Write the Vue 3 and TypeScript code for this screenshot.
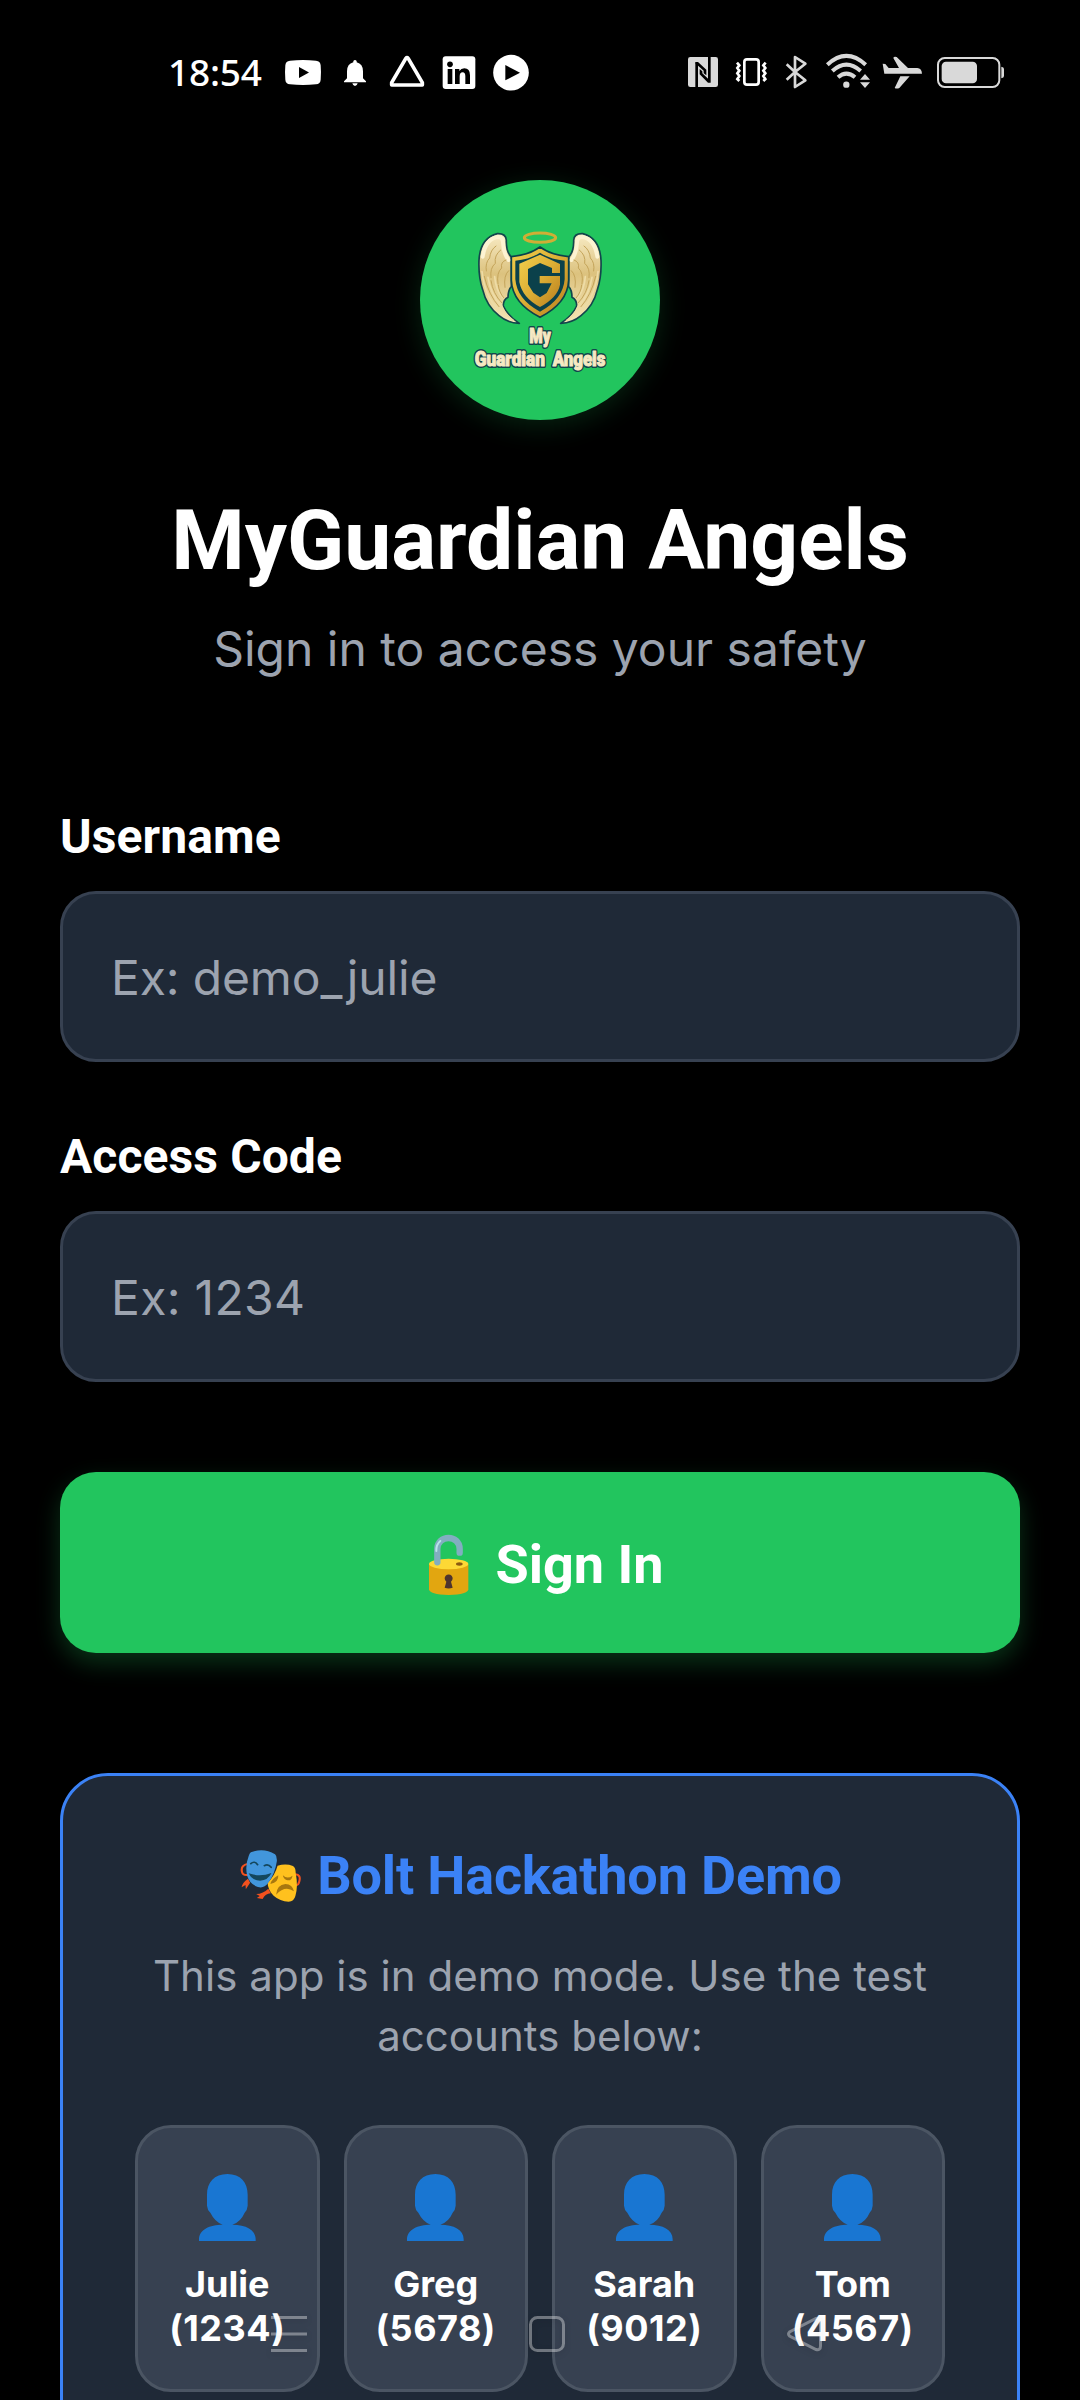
<script setup lang="ts">
import { ref } from 'vue'

// --- TYPES ---
interface DemoAccount {
  name: string
  username: string
  code: string
}

// --- STATE ---
const username = ref('')
const accessCode = ref('')

const accounts: DemoAccount[] = [
  { name: 'Julie', username: 'demo_julie', code: '1234' },
  { name: 'Greg', username: 'demo_greg', code: '5678' },
  { name: 'Sarah', username: 'demo_sarah', code: '9012' },
  { name: 'Tom', username: 'demo_tom', code: '4567' },
]

const fillAccount = (account: DemoAccount) => {
  username.value = account.username
  accessCode.value = account.code
}
</script>

<template>
  <div class="screen">
    <!-- Status bar -->
    <header class="status-bar">
      <span class="time">18:54</span>
      <div class="notifications">
        <svg viewBox="435 69 108 114">
          <path fill="#fff" fill-rule="evenodd" d="M450 92Q489 88 528 92Q541 93 542 106Q544 128 542 149Q541 162 528 163Q489 167 450 163Q437 162 436 149Q434 128 436 106Q437 93 450 92ZM477 111V144L507 127.500Z" />
        </svg>
        <svg viewBox="591 69 108 114">
          <path fill="#fff" d="M640 93Q645 87 650 93V97Q669 102 669 124V145L678 154V157H612V154L621 145V124Q621 102 640 97ZM637 160H653Q651 168 645 168Q639 168 637 160Z" />
        </svg>
        <svg viewBox="747 69 108 114">
          <path fill="none" stroke="#fff" stroke-width="11" stroke-linejoin="round" d="M797.500 85L755 158V165H847V158L804.500 85Q801 81 797.500 85Z" />
        </svg>
        <svg viewBox="904 69 108 114">
          <rect x="909" y="79" width="98" height="98" rx="9" fill="#fff" />
          <circle cx="931" cy="103" r="8.500" fill="#000" />
          <path fill="#000" d="M924 117H938V162H924ZM946 117H959V123Q964 115 974 115Q991 115 991 136V162H977V139Q977 127 969 127Q960 127 960 139V162H946Z" />
        </svg>
        <svg viewBox="1059 69 108 114">
          <circle cx="1113" cy="128" r="53.500" fill="#fff" />
          <path fill="#000" d="M1096 105V151L1140 128Z" />
        </svg>
      </div>
      <div class="system-icons">
        <svg class="w-nfc" viewBox="84 69 96 114">
          <rect x="84" y="81" width="90" height="90" rx="7" fill="#d9d9d9" />
          <path fill="none" stroke="#000" stroke-width="8" d="M110 172V98M148 80V154" />
          <path fill="#000" d="M106 96H114L139 119V136L131 130V122L106 100ZM152 158H144L119 133V117L127 124V130L152 154Z" />
        </svg>
        <svg class="w-vibrate" viewBox="225 69 108 114">
          <rect x="253" y="88" width="43" height="76" rx="8" fill="none" stroke="#fff" stroke-width="8" />
          <path fill="none" stroke="#fff" stroke-width="8" d="M231 98L238 106L232 114L238 122L232 130L238 138L232 147L238 153M317 98L310 106L316 114L310 122L316 130L310 138L316 147L310 153" />
        </svg>
        <svg class="w-bluetooth" viewBox="378 69 75 114">
          <path fill="none" stroke="#d9d9d9" stroke-width="8" stroke-linejoin="round" d="M380 103L405 126L436 151L405 171V81L436 101L405 126L380 149" />
        </svg>
        <svg class="w-wifi" viewBox="498 69 123 114">
          <g fill="none" stroke="#d9d9d9" stroke-width="12">
            <path d="M502 104Q559 51 617 104" />
            <path d="M517 123Q559 85 602 123" />
            <path d="M534 142Q559 120 585 142" />
          </g>
          <circle cx="559" cy="164" r="9.500" fill="#d9d9d9" />
          <path fill="#d9d9d9" d="M615 132L630 149H600ZM615 174L600 157H630Z" />
        </svg>
        <svg class="w-plane" viewBox="666 69 120 114">
          <path fill="#d9d9d9" d="M668 101L676 102L686 114H717L700 84Q701 79 710 81L744 114H772Q785 115 786 131H673ZM721 139H749L718 174Q710 177 704 174Z" />
        </svg>
        <svg class="w-battery" viewBox="831 69 201 114">
          <rect x="834" y="84" width="184" height="87" rx="20" fill="none" stroke="#d9d9d9" stroke-width="6" />
          <rect x="845" y="95" width="106" height="65" rx="13" fill="#d9d9d9" />
          <path fill="#d9d9d9" d="M1024 110Q1032 111 1032 117V138Q1032 144 1024 145Z" />
        </svg>
      </div>
    </header>

    <main class="content">
      <!-- Brand -->
      <div class="logo">
        <svg viewBox="60 60 720 720">
          <defs>
            <linearGradient id="gold" x1="0" y1="0" x2="1" y2="1">
              <stop offset="0" stop-color="#f2cf4c" />
              <stop offset="0.5" stop-color="#dcae35" />
              <stop offset="1" stop-color="#b97d1d" />
            </linearGradient>
            <linearGradient id="feather" x1="0" y1="0" x2="0" y2="1">
              <stop offset="0" stop-color="#f8ebc4" />
              <stop offset="0.45" stop-color="#dcc27e" />
              <stop offset="1" stop-color="#f5e6b8" />
            </linearGradient>
            <g id="wing">
              <path fill="url(#feather)" stroke="#12464c" stroke-width="5" stroke-linejoin="round" d="M292 221Q318 220 319 241Q318 275 334 291V380Q324 390 324 412Q309 420 310 438Q322 466 358 490Q323 489 297 467Q259 437 248 389Q235 350 237 301Q240 235 292 221Z" />
              <path fill="none" stroke="#fdf3d2" stroke-width="12" stroke-linecap="round" d="M248 290Q256 236 294 231Q309 232 309 247Q310 280 326 300" />
              <path fill="none" stroke="#eedca6" stroke-width="5" stroke-linecap="round" d="M246 335Q254 408 294 448M264 352Q272 402 302 436M284 350Q287 388 307 413M305 437Q314 463 340 481" />
              <path fill="none" stroke="#c4a45a" stroke-width="3" stroke-linecap="round" d="M288 258Q271 270 269 294Q255 308 259 333M302 270Q282 286 286 310Q269 324 273 353M318 300Q301 306 305 324Q289 338 294 371M326 332Q310 346 315 382M253 349Q266 405 297 440M273 362Q279 401 305 428M295 375Q297 397 311 413" />
            </g>
          </defs>
          <ellipse cx="420" cy="233" rx="47" ry="14" fill="none" stroke="#cfae35" stroke-width="9" />
          <use href="#wing" />
          <use href="#wing" transform="translate(840 0) scale(-1 1)" />
          <path fill="url(#gold)" stroke="#0b414b" stroke-width="5" d="M420 261Q453 285 506 290V361Q503 430 420 472Q337 430 334 361V290Q387 285 420 261Z" />
          <path fill="#0b414b" d="M420 278Q450 298 494 302V358Q489 419 420 455Q351 419 346 358V302Q390 298 420 278Z" />
          <path fill="url(#gold)" d="M420 284L480 312V339H456V324L420 309L384 327V373L400 398L420 412L440 399L455 370H419V348H480V374Q473 412 420 441Q367 413 358 366V311Z" />
          <g class="logo-text">
            <text x="388" y="549" textLength="64" lengthAdjust="spacingAndGlyphs">My</text>
            <text x="224" y="618" textLength="211" lengthAdjust="spacingAndGlyphs">Guardian</text>
            <text x="458" y="618" textLength="158" lengthAdjust="spacingAndGlyphs">Angels</text>
          </g>
          <g class="logo-text front">
            <text x="388" y="549" textLength="64" lengthAdjust="spacingAndGlyphs">My</text>
            <text x="224" y="618" textLength="211" lengthAdjust="spacingAndGlyphs">Guardian</text>
            <text x="458" y="618" textLength="158" lengthAdjust="spacingAndGlyphs">Angels</text>
          </g>
        </svg>
      </div>
      <h1 class="title">MyGuardian Angels</h1>
      <p class="subtitle">Sign in to access your safety</p>

      <!-- Login form -->
      <form class="login-form" @submit.prevent>
        <div class="field">
          <label for="username">Username</label>
          <input id="username" v-model="username" type="text" placeholder="Ex: demo_julie" />
        </div>
        <div class="field">
          <label for="code">Access Code</label>
          <input id="code" v-model="accessCode" class="code-input" type="text" placeholder="Ex: 1234" />
        </div>
        <button class="btn-signin" type="submit">
          <svg class="lock" viewBox="57 100 198 192">
            <path fill="#e2a610" d="M90 193V269Q91 285 149 286Q207 285 208 269V193Z" />
            <ellipse cx="149" cy="193" rx="59" ry="15.500" fill="#fdd835" />
            <ellipse cx="181" cy="193" rx="10" ry="5" fill="#8a5a12" />
            <path fill="none" stroke="#82aec0" stroke-width="19" stroke-linecap="round" d="M115 188V148C115 104 182 104 182 148V159" />
            <path fill="none" stroke="#b9e4ea" stroke-width="6" stroke-linecap="round" d="M112 154Q111 135 124 124" />
            <path fill="#4e342e" d="M142 246A12 12 0 1 1 156 246L161 264Q149 269 137 264Z" />
          </svg>
          <span>Sign In</span>
        </button>
      </form>

      <!-- Demo accounts -->
      <section class="demo-card">
        <h2>
          <svg class="masks" viewBox="558 296 188 168" preserveAspectRatio="none">
            <path fill="none" stroke="#f4511e" stroke-width="6" d="M587 343Q565 347 569 367Q571 379 586 377M719 375Q735 376 730 396Q728 407 720 408" />
            <path fill="#f4511e" d="M586 388L592 400L580 420L579 407L568 414Q570 400 586 388ZM643 418L650 432Q635 433 627 449L611 446L619 440L609 434Q629 433 643 418Z" />
            <path fill="#ffc11e" d="M669 349Q693 342 712 350Q720 354 720 371Q727 412 719 440Q715 457 700 457Q676 456 658 439Q642 422 641 401Q662 377 669 349Z" />
            <path fill="#4296dc" d="M594 309Q630 294 662 315Q668 320 667 336Q662 374 642 402Q631 418 614 413Q591 405 584 380Q577 350 588 320Q590 312 594 309Z" />
            <path fill="#14475d" d="M588 372Q620 384 652 371Q642 393 620 394Q597 394 588 372Z" />
            <path fill="none" stroke="#14475d" stroke-width="5" stroke-linecap="round" d="M594 343Q604 333 613 346M632 349Q643 343 651 354" />
            <path fill="#a7770f" d="M671 378Q673 398 649 404Q652 389 671 378ZM684 378Q696 391 711 379Q708 397 694 392Q685 388 684 378ZM665 436Q667 406 691 404Q711 405 715 426Q690 407 665 436Z" />
          </svg>
          <span>Bolt Hackathon Demo</span>
        </h2>
        <p class="demo-text">This app is in demo mode. Use the test accounts below:</p>
        <div class="accounts">
          <button
            v-for="account in accounts"
            :key="account.username"
            class="account"
            type="button"
            @click="fillAccount(account)"
          >
            <svg class="avatar" viewBox="234 222 171 201">
              <path fill="#1976d2" d="M319 222C359 222 380 247 380 284V317Q379 330 371 338Q359 366 334 374C374 374 404 389 404 418V423H234V418C234 389 266 374 305 374Q282 366 268 338Q259 330 258 317V284C258 247 280 222 319 222Z" />
            </svg>
            <span class="account-name">{{ account.name }}<br /><span class="account-code">({{ account.code }})</span></span>
          </button>
        </div>
      </section>
    </main>

    <!-- System navigation, lies over the page -->
    <nav class="nav-bar">
      <svg viewBox="0 0 36 36"><path d="M0 1.500H36M0 18H36M0 34.500H36" /></svg>
      <svg viewBox="0 0 36 36"><rect x="1.500" y="1.500" width="33" height="33" rx="7" /></svg>
      <svg viewBox="0 0 36 36"><path d="M2.500 16Q0.500 18 2.500 20L29 33.500Q33.500 34.500 33.500 30V6Q33.500 1.500 29 2.500Z" /></svg>
    </nav>
  </div>
</template>

<style>
body {
  margin: 0;
  background: #000;
}
</style>

<style scoped>
.screen {
  position: relative;
  height: 2400px;
  overflow: hidden;
  background: #000;
  color: #fff;
  font-family: Inter, 'Liberation Sans', sans-serif;
}

svg { display: block; overflow: visible; }

/* Status bar */
.status-bar {
  display: flex;
  align-items: center;
  height: 144px;
  padding: 0 76px 0 168px;
}
.time {
  width: 117px;
  font: 500 37px/50px 'Noto Sans', sans-serif;
  letter-spacing: -0.2px;
}
.notifications { display: flex; gap: 16px; }
.notifications svg { width: 36px; height: 38px; }
.system-icons { display: flex; gap: 15px; margin-left: auto; }
.system-icons svg { height: 38px; }
.w-nfc { width: 32px; }
.w-vibrate { width: 36px; }
.w-bluetooth { width: 25px; }
.w-wifi { width: 41px; }
.w-plane { width: 40px; }
.w-battery { width: 67px; }

.content {
  display: flex;
  flex-direction: column;
  padding: 36px 60px 0;
}

/* Brand */
.logo {
  align-self: center;
  width: 240px;
  height: 240px;
  border-radius: 50%;
  background: #22c55e;
  box-shadow: 0 6px 28px rgba(34, 197, 94, 0.18);
}
.logo-text {
  font-family: Roboto, sans-serif;
  font-size: 58px;
  font-weight: 900;
  fill: #12464c;
  stroke: #12464c;
  stroke-width: 12px;
  stroke-linejoin: round;
}
.logo-text.front {
  fill: #f6e9c2;
  stroke: #f6e9c2;
  stroke-width: 3px;
}
.title {
  margin: 71px 0 0;
  font: 700 84px/100px Roboto, sans-serif;
  letter-spacing: -0.05px;
  text-align: center;
}
.subtitle {
  margin: 29px 0 0;
  font-size: 48px;
  line-height: 58px;
  text-align: center;
  color: #9ca3af;
}

/* Form */
.login-form {
  display: flex;
  flex-direction: column;
  margin-top: 131px;
}
.field {
  display: flex;
  flex-direction: column;
  gap: 26px;
}
.field + .field { margin-top: 67px; }
.field label {
  font: 700 48px/56px Roboto, sans-serif;
  letter-spacing: 0.1px;
}
.field input {
  box-sizing: border-box;
  width: 100%;
  height: 171px;
  padding: 2px 48px 0;
  border: 3px solid #374151;
  border-radius: 36px;
  outline: none;
  background: #1f2937;
  color: #fff;
  font: 400 48px/58px Inter, sans-serif;
  letter-spacing: -0.15px;
}
.field .code-input { letter-spacing: 0.3px; }
.field input::placeholder { color: #9ca3af; opacity: 1; }

.btn-signin {
  display: flex;
  align-items: center;
  justify-content: center;
  gap: 11px;
  height: 181px;
  margin-top: 90px;
  padding: 5px 0 0 2px;
  border: none;
  border-radius: 36px;
  background: #22c55e;
  color: #fff;
  font: 700 54px/64px Roboto, sans-serif;
  box-shadow: 0 10px 24px rgba(34, 197, 94, 0.26);
}
.lock { width: 66px; height: 64px; }

/* Demo card */
.demo-card {
  height: 800px;
  margin-top: 120px;
  padding: 72px;
  border: 3px solid #3b82f6;
  border-radius: 48px;
  background: #1f2937;
}
.demo-card h2 {
  display: flex;
  align-items: center;
  justify-content: center;
  gap: 12px;
  margin: 0;
  color: #3b82f6;
  font: 700 54px/56px Roboto, sans-serif;
  letter-spacing: -0.18px;
}
.masks { width: 67px; height: 56px; }
.demo-text {
  margin: 42px 0 59px;
  font-size: 42px;
  line-height: 60px;
  letter-spacing: 0.05px;
  text-align: center;
  color: #9ca3af;
}
.accounts {
  display: grid;
  grid-template-columns: repeat(4, 1fr);
  gap: 24px;
}
.account {
  display: flex;
  flex-direction: column;
  align-items: center;
  gap: 21px;
  padding: 46px 0 39px;
  border: 3px solid #4b5563;
  border-radius: 36px;
  background: #374151;
  color: #fff;
  font: 700 36px/44px Inter, sans-serif;
}
.account-code { letter-spacing: 0.5px; }
.avatar { width: 57px; height: 67px; }

/* System navigation */
.nav-bar {
  position: absolute;
  left: 271px;
  bottom: 48px;
  display: flex;
  gap: 222px;
  pointer-events: none;
}
.nav-bar svg {
  width: 36px;
  height: 36px;
  fill: none;
  stroke: rgba(255, 255, 255, 0.36);
  stroke-width: 3;
  filter: drop-shadow(0 2px 3px rgba(0, 0, 0, 0.3));
}
</style>
